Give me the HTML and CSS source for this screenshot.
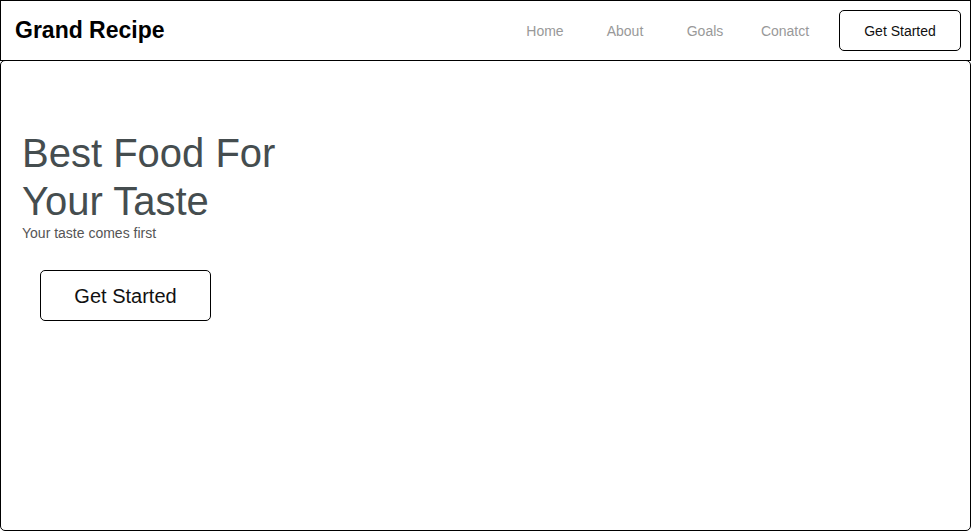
FILE: index.html
```html
<!DOCTYPE html>
<html lang="en">
<head>
<meta charset="utf-8">
<title>Grand Recipe</title>
<link rel="stylesheet" href="styles.css">
</head>
<body>
<header class="topbar">
  <div class="logo">Grand Recipe</div>
  <nav class="nav">
    <a class="nav-link" href="#">Home</a>
    <a class="nav-link" href="#">About</a>
    <a class="nav-link" href="#">Goals</a>
    <a class="nav-link" href="#">Conatct</a>
  </nav>
  <button class="btn btn-small">Get Started</button>
</header>
<main class="hero">
  <h1 class="hero-title">Best Food For<br>Your Taste</h1>
  <p class="hero-sub">Your taste comes first</p>
  <button class="btn btn-large">Get Started</button>
</main>
</body>
</html>
```
FILE: styles.css
```css
* { box-sizing: border-box; }
html, body {
  margin: 0;
  padding: 0;
  background: #fff;
  font-family: "Liberation Sans", Arial, sans-serif;
}
.topbar {
  display: flex;
  align-items: center;
  height: 61px;
  width: 971px;
  border: 1px solid #000;
  padding: 0 9px 0 14px;
}
.logo {
  font-size: 23px;
  font-weight: bold;
  color: #000;
}
.nav {
  margin-left: auto;
  display: flex;
}
.nav-link {
  width: 80px;
  text-align: center;
  font-size: 14px;
  color: #999;
  text-decoration: none;
}
.btn {
  background: #fff;
  border: 1px solid #000;
  border-radius: 5px;
  font-family: "Liberation Sans", Arial, sans-serif;
  color: #111;
  cursor: pointer;
  padding: 0;
}
.btn-small {
  margin-left: 14px;
  width: 122px;
  height: 41px;
  font-size: 14px;
}
.hero {
  display: flex;
  flex-direction: column;
  align-items: flex-start;
  width: 971px;
  height: 471px;
  margin-top: -1px;
  border: 1px solid #000;
  border-radius: 5px;
  padding: 68px 21px 0 21px;
}
.hero-title {
  margin: 0;
  font-size: 40px;
  line-height: 48px;
  font-weight: normal;
  color: #454d4f;
}
.hero-sub {
  margin: 0;
  font-size: 14px;
  color: #555;
}
.btn-large {
  margin: 29px 0 0 18px;
  width: 171px;
  height: 51px;
  padding-top: 2px;
  font-size: 20px;
}
```
